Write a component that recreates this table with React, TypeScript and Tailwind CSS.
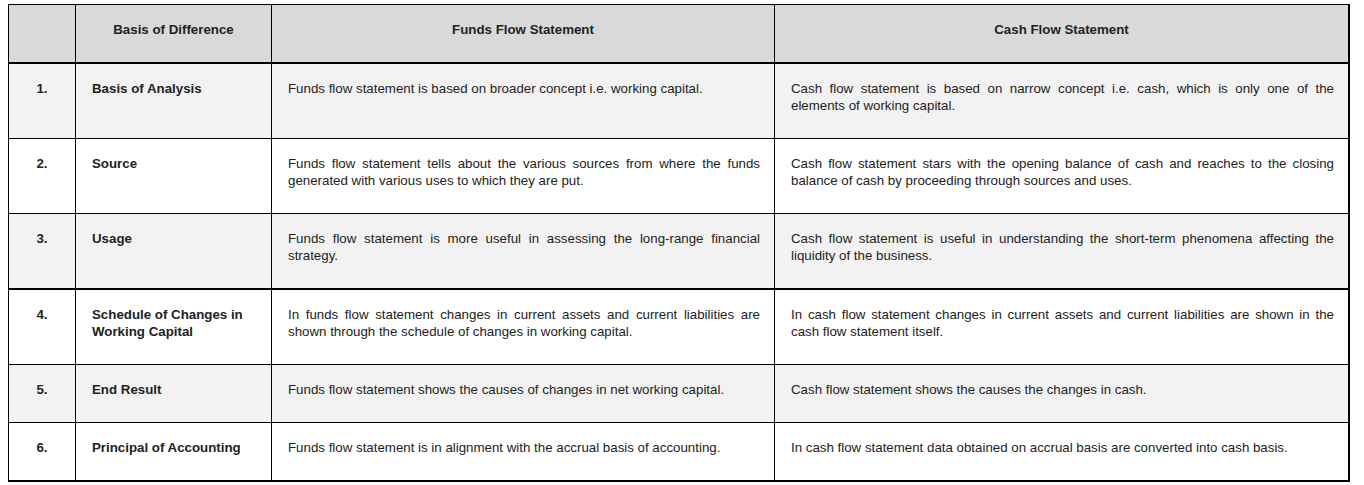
import React from "react";

const rows = [
  {
    n: "1.",
    basis: "Basis of Analysis",
    funds: "Funds flow statement is based on broader concept i.e. working capital.",
    cash: "Cash flow statement is based on narrow concept i.e. cash, which is only one of the elements of working capital.",
  },
  {
    n: "2.",
    basis: "Source",
    funds: "Funds flow statement tells about the various sources from where the funds generated with various uses to which they are put.",
    cash: "Cash flow statement stars with the opening balance of cash and reaches to the closing balance of cash by proceeding through sources and uses.",
  },
  {
    n: "3.",
    basis: "Usage",
    funds: "Funds flow statement is more useful in assessing the long-range financial strategy.",
    cash: "Cash flow statement is useful in understanding the short-term phenomena affecting the liquidity of the business.",
  },
  {
    n: "4.",
    basis: "Schedule of Changes in Working Capital",
    funds: "In funds flow statement changes in current assets and current liabilities are shown through the schedule of changes in working capital.",
    cash: "In cash flow statement changes in current assets and current liabilities are shown in the cash flow statement itself.",
  },
  {
    n: "5.",
    basis: "End Result",
    funds: "Funds flow statement shows the causes of changes in net working capital.",
    cash: "Cash flow statement shows the causes the changes in cash.",
  },
  {
    n: "6.",
    basis: "Principal of Accounting",
    funds: "Funds flow statement is in alignment with the accrual basis of accounting.",
    cash: "In cash flow statement data obtained on accrual basis are converted into cash basis.",
  },
];

export default function App() {
  return (
    <div className="bg-white w-[1364px] h-[485px] pt-[4px] pl-[8px] font-['Liberation_Sans',Arial,sans-serif] text-[13.3px] leading-[17px] text-[#222]">
      <table className="table-fixed border-collapse w-[1342px] border-2 border-black border-l border-t">
        <colgroup>
          <col className="w-[67px]" />
          <col className="w-[196px]" />
          <col className="w-[503px]" />
          <col />
        </colgroup>
        <thead>
          <tr className="bg-[#d9d9d9] h-[58px] border-b-2 border-black align-top">
            <th className="border-r border-black pt-[16px]"></th>
            <th className="border-r border-black pt-[16px] font-bold text-center">Basis of Difference</th>
            <th className="border-r border-black pt-[16px] font-bold text-center">Funds Flow Statement</th>
            <th className="pt-[16px] font-bold text-center">Cash Flow Statement</th>
          </tr>
        </thead>
        <tbody>
          {rows.map((r, i) => (
            <tr
              key={r.n}
              className={`${i % 2 === 0 ? "bg-[#f2f2f2]" : "bg-white"} ${i === 2 ? "border-b-2" : "border-b"} border-black align-top`}
            >
              <td className="border-r border-black pt-[16px] pb-[24px] text-center font-bold">{r.n}</td>
              <td className="border-r border-black pt-[16px] pb-[24px] pl-[16px] pr-[12px] font-bold">{r.basis}</td>
              <td className="border-r border-black pt-[16px] pb-[24px] pl-[16px] pr-[14px] text-justify">{r.funds}</td>
              <td className="pt-[16px] pb-[24px] pl-[16px] pr-[14px] text-justify">{r.cash}</td>
            </tr>
          ))}
        </tbody>
      </table>
    </div>
  );
}
